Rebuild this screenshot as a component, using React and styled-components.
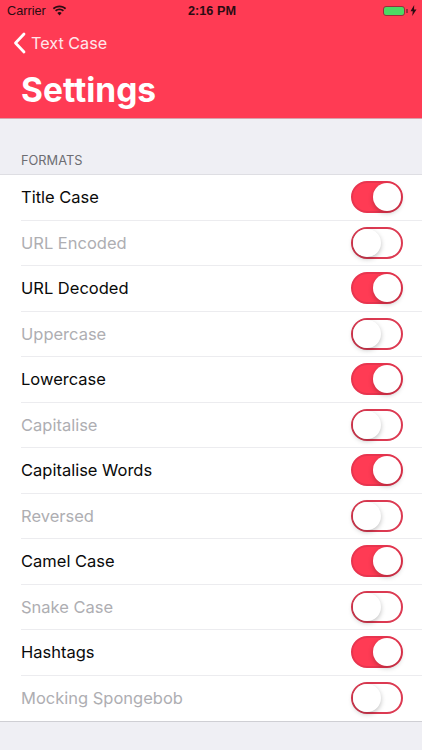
import React from "react";
import styled, { createGlobalStyle } from "styled-components";

const Global = createGlobalStyle`
  html, body { margin: 0; padding: 0; background: #efeff4; }
  body { font-family: Inter, "Liberation Sans", sans-serif; }
`;

const Screen = styled.div`
  width: 422px;
  height: 750px;
  overflow: hidden;
  display: flex;
  flex-direction: column;
  background: #efeff4;
`;

const Header = styled.header`
  height: 118px;
  background: #ff3b54;
  border-bottom: 1px solid #d8a0ac;
  display: flex;
  flex-direction: column;
`;

const StatusBar = styled.div`
  height: 21px;
  padding: 0 5px 0 7px;
  display: grid;
  grid-template-columns: 1fr auto 1fr;
  align-items: center;
  font-family: "Liberation Sans", sans-serif;
  font-size: 12.7px;
  color: #2a0c12;
`;

const Left = styled.div`
  display: flex;
  align-items: center;
  gap: 6px;
`;

const Time = styled.div`
  font-weight: 700;
`;

const Right = styled.div`
  display: flex;
  align-items: center;
  justify-content: flex-end;
  gap: 5px;
`;

const Battery = styled.div`
  position: relative;
  width: 20px;
  height: 8px;
  border: 1.5px solid #9a2c3d;
  border-radius: 3px;
  background: #4cd964;
  &::after {
    content: "";
    position: absolute;
    right: -3.5px;
    top: 2px;
    width: 1.5px;
    height: 4px;
    background: #9a2c3d;
  }
`;

const BackRow = styled.div`
  height: 44px;
  padding-left: 13px;
  display: flex;
  align-items: center;
  gap: 5px;
  font-family: Inter, sans-serif;
  font-size: 16.2px;
  color: #ffe6ea;
`;

const Title = styled.h1`
  margin: 0;
  padding: 3px 0 0 21px;
  font-family: Inter, sans-serif;
  font-size: 33.5px;
  line-height: 44px;
  font-weight: 700;
  color: #fff;
`;

const SectionLabel = styled.div`
  height: 55px;
  padding: 0 21px 6px;
  box-sizing: border-box;
  display: flex;
  align-items: flex-end;
  font-family: Inter, sans-serif;
  font-size: 12.8px;
  color: #6d6d72;
`;

const List = styled.ul`
  margin: 0;
  padding: 0;
  list-style: none;
  background: #fff;
  border-top: 1px solid #dedee3;
  border-bottom: 1px solid #cfcfd4;
`;

const Row = styled.li`
  height: 45.5px;
  margin-left: 21px;
  padding-right: 19px;
  box-sizing: border-box;
  display: flex;
  align-items: center;
  justify-content: space-between;
  border-bottom: 1px solid #ececef;
  &:last-child { border-bottom: none; height: 45px; }
`;

const Label = styled.span`
  font-family: Inter, sans-serif;
  font-size: 16.5px;
  color: ${p => (p.$on ? "#0a0a0a" : "#aeaeb2")};
`;

const Switch = styled.div`
  position: relative;
  width: 52px;
  height: 32px;
  box-sizing: border-box;
  border-radius: 16px;
  border: 2px solid ${p => (p.$on ? "#e8354f" : "#dc3a52")};
  background: ${p => (p.$on ? "#ff3b54" : "#fff")};
`;

const Knob = styled.div`
  position: absolute;
  top: 0;
  ${p => (p.$on ? "right: 0;" : "left: 0;")}
  width: 28px;
  height: 28px;
  border-radius: 50%;
  background: #fff;
  box-shadow: 0 2px 5px rgba(0, 0, 0, 0.25);
`;

const formats = [
  ["Title Case", true],
  ["URL Encoded", false],
  ["URL Decoded", true],
  ["Uppercase", false],
  ["Lowercase", true],
  ["Capitalise", false],
  ["Capitalise Words", true],
  ["Reversed", false],
  ["Camel Case", true],
  ["Snake Case", false],
  ["Hashtags", true],
  ["Mocking Spongebob", false],
];

export default function App() {
  return (
    <Screen>
      <Global />
      <Header>
        <StatusBar>
          <Left>
            <span>Carrier</span>
            <svg width="15" height="11" viewBox="0 0 15 11" fill="#2a0c12">
              <path d="M7.5 2.2c2.1 0 4 .8 5.5 2.2l1.2-1.3C12.4 1.4 10 .4 7.5.4S2.6 1.4.8 3.1L2 4.4c1.5-1.4 3.4-2.2 5.5-2.2z" />
              <path d="M7.5 5.2c1.3 0 2.4.5 3.3 1.3L12 5.2C10.8 4.1 9.2 3.4 7.5 3.4S4.2 4.1 3 5.2l1.2 1.3c.9-.8 2-1.3 3.3-1.3z" />
              <path d="M7.5 10.4l2.2-2.5c-.6-.5-1.4-.9-2.2-.9s-1.6.4-2.2.9z" />
            </svg>
          </Left>
          <Time>2:16 PM</Time>
          <Right>
            <Battery />
            <svg width="7" height="11" viewBox="0 0 7 11" fill="#2a0c12">
              <path d="M4.2 0 .5 6.2h2.3L2.2 11 6.5 4.4H4z" />
            </svg>
          </Right>
        </StatusBar>
        <BackRow>
          <svg width="13" height="22" viewBox="0 0 13 22" fill="none" stroke="#fff" strokeWidth="2.8" strokeLinecap="round" strokeLinejoin="round">
            <path d="M11 2 2.5 11 11 20" />
          </svg>
          <span>Text Case</span>
        </BackRow>
        <Title>Settings</Title>
      </Header>
      <SectionLabel>FORMATS</SectionLabel>
      <List>
        {formats.map(([name, on]) => (
          <Row key={name}>
            <Label $on={on}>{name}</Label>
            <Switch $on={on}>
              <Knob $on={on} />
            </Switch>
          </Row>
        ))}
      </List>
    </Screen>
  );
}
